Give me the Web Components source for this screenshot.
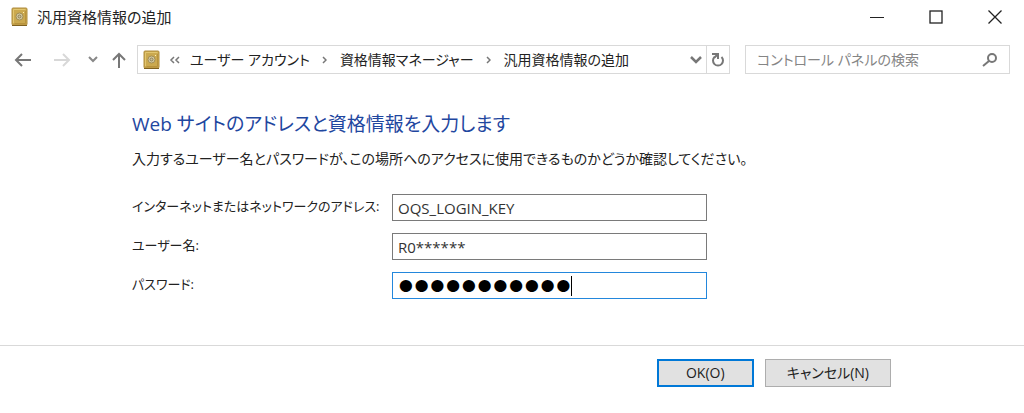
<!DOCTYPE html>
<html lang="ja">
<head>
<meta charset="utf-8">
<meta name="viewport" content="width=device-width, initial-scale=1">
<title>汎用資格情報の追加</title>
<style>
  body {
    margin: 0;
    background: #fff;
    color: #222;
    font: 15px/20px "Open Sans", "Noto Sans CJK JP", sans-serif;
    font-feature-settings: "palt";
  }
</style>
</head>
<body>
<credential-window>
  <title-bar slot="title">汎用資格情報の追加</title-bar>
  <explorer-bar slot="nav">
    <crumb-item>ユーザー アカウント</crumb-item>
    <crumb-item>資格情報マネージャー</crumb-item>
    <crumb-item>汎用資格情報の追加</crumb-item>
  </explorer-bar>
  <credential-form>
    <span slot="heading">Web サイトのアドレスと資格情報を入力します</span>
    <span slot="note">入力するユーザー名とパスワードが、この場所へのアクセスに使用できるものかどうか確認してください。</span>
    <form-field label="インターネットまたはネットワークのアドレス:" value="OQS_LOGIN_KEY"></form-field>
    <form-field label="ユーザー名:" value="R0******"></form-field>
    <form-field label="パスワード:" type="password" value="password123" active></form-field>
  </credential-form>
  <dialog-button slot="actions" primary>OK(O)</dialog-button>
  <dialog-button slot="actions">キャンセル(N)</dialog-button>
</credential-window>

<script>
(function() {
  class BaseElement extends HTMLElement {
    connectedCallback() {
      this._root = this.attachShadow({mode: 'open'});
      this._root.innerHTML = this.render();
    }
  }

  class CredentialWindow extends BaseElement {
    render() {
      return `<style>
          :host {
            display: flex;
            flex-direction: column;
            min-height: 100vh;
          }
          main {
            flex: 1;
          }
          footer {
            border-top: 1px solid #d9d9d9;
            box-sizing: border-box;
            display: flex;
            gap: 11px;
            justify-content: flex-end;
            padding: 13px 133px 26px 16px;
          }
        </style>
        <slot name="title"></slot>
        <slot name="nav"></slot>
        <main><slot></slot></main>
        <footer><slot name="actions"></slot></footer>`;
    }
  }

  // Gold safe used in the title bar and the address bar
  class VaultIcon extends BaseElement {
    render() {
      return `<style>
          :host { display: block; height: 20px; width: 17px; }
          svg { display: block; }
        </style>
        <svg width="17" height="20" viewBox="0 0 17 20" aria-hidden="true">
          <rect x="1" y="1" width="15" height="17" rx="1" fill="#cba94f" stroke="#b08d3c"/>
          <path d="M1 18.5h15" stroke="#7f6120"/>
          <path d="M2.5 16V2.500h12" fill="none" stroke="#e2c670"/>
          <path d="M14.500 4v12.500h-11" fill="none" stroke="#b8933d"/>
          <circle cx="8.500" cy="9.500" r="3.500" fill="#d9cfa6" stroke="#a08c55"/>
          <circle cx="8.500" cy="9.500" r="1.500" fill="#c9bf98" stroke="#8a7d55"/>
          <path d="M12 6l1-1" stroke="#fff1b5"/>
        </svg>`;
    }
  }

  class TitleBar extends BaseElement {
    render() {
      return `<style>
          :host {
            align-items: center;
            display: flex;
            height: 34px;
            padding-left: 11px;
          }
          span {
            flex: 1;
            margin-left: 9px;
          }
          button {
            background: none;
            border: 0;
            height: 34px;
            padding: 0;
            width: 59px;
          }
          svg { display: block; margin: auto; }
        </style>
        <vault-icon></vault-icon>
        <span><slot></slot></span>
        <button aria-label="最小化"><svg width="14" height="14"><path d="M0 7.500h14" stroke="#222"/></svg></button>
        <button aria-label="最大化"><svg width="14" height="14"><rect x="1" y="1" width="12" height="12" fill="none" stroke="#222" stroke-width="1.300"/></svg></button>
        <button aria-label="閉じる"><svg width="14" height="14"><path d="M.5.5l13 13M13.500.5l-13 13" stroke="#222" stroke-width="1.300"/></svg></button>`;
    }
  }

  class ExplorerBar extends BaseElement {
    render() {
      return `<style>
          :host {
            align-items: center;
            display: flex;
            font-size: 14px;
            padding: 11px 14px 0;
          }
          button {
            background: none;
            border: 0;
            flex: none;
            padding: 0;
          }
          svg { display: block; }
          nav {
            display: flex;
            gap: 13px;
            margin-right: 10px;
          }
          .address, .search {
            align-items: center;
            border: 1px solid #d9d9d9;
            box-sizing: border-box;
            display: flex;
            height: 29px;
          }
          .address {
            flex: 1;
            padding-left: 5px;
          }
          .spacer { flex: 1; }
          .more { margin: 0 10px 0 9px; }
          .reload {
            align-items: center;
            align-self: stretch;
            border-left: 1px solid #d9d9d9;
            display: flex;
            justify-content: center;
            margin-left: 3px;
            width: 23px;
          }
          .search {
            margin-left: 15px;
            padding: 0 11px;
            width: 265px;
          }
          input {
            background: none;
            border: 0;
            color: #222;
            flex: 1;
            font: inherit;
            font-feature-settings: inherit;
            min-width: 0;
            outline: 0;
            padding: 0;
          }
          input::placeholder { color: #858585; }
        </style>
        <nav>
          <button aria-label="戻る"><svg width="18" height="18" fill="none" stroke="#777" stroke-width="2"><path d="M17 9H2M8 3L2 9l6 6"/></svg></button>
          <button aria-label="進む"><svg width="28" height="18" fill="none" stroke="#d8d8d8" stroke-width="2"><path d="M9 9h15M18 3l6 6-6 6"/></svg></button>
          <button aria-label="最近表示した場所"><svg width="12" height="18" fill="none" stroke="#888" stroke-width="2"><path d="M3 6l4 4 4-4"/></svg></button>
          <button aria-label="上へ"><svg width="16" height="18" fill="none" stroke="#777" stroke-width="2"><path d="M8 17V3M2 9l6-6 6 6"/></svg></button>
        </nav>
        <div class="address">
          <vault-icon></vault-icon>
          <svg class="more" width="11" height="10" fill="none" stroke="#777" stroke-width="1.500"><path d="M5 2L2 5l3 3M10 2L7 5l3 3"/></svg>
          <slot></slot>
          <div class="spacer"></div>
          <button aria-label="以前の場所"><svg width="14" height="10" fill="none" stroke="#777" stroke-width="2.500"><path d="M2 2l5 5 5-5"/></svg></button>
          <button class="reload" aria-label="最新の情報に更新"><svg width="14" height="16" fill="none" stroke="#777" stroke-width="2"><path d="M10.500 5a5 5 0 1 1-7 0M1 2h6v5M7 2L3.500 5.500"/></svg></button>
        </div>
        <div class="search">
          <input type="search" aria-label="検索" placeholder="コントロール パネルの検索">
          <svg width="16" height="16" fill="none" stroke="#777" stroke-width="2"><circle cx="10" cy="6" r="4"/><path d="M7 9l-6 5"/></svg>
        </div>`;
    }
  }

  class CrumbItem extends BaseElement {
    render() {
      return `<style>
          :host {
            align-items: center;
            display: flex;
            white-space: nowrap;
          }
          :host(:last-of-type) svg { display: none; }
          a {
            color: inherit;
            text-decoration: none;
          }
          svg { margin: 0 13px 0 12px; }
        </style>
        <a href="#"><slot></slot></a>
        <svg width="5" height="8" fill="none" stroke="#777" stroke-width="1.500"><path d="M1 1l3 3-3 3"/></svg>`;
    }
  }

  class CredentialForm extends BaseElement {
    render() {
      return `<style>
          :host {
            display: block;
            padding: 36px 16px 16px 132px;
          }
          h1 {
            color: #1f479f;
            font-size: 19px;
            font-weight: normal;
            line-height: 28px;
            margin: 0;
          }
          p {
            font-size: 14px;
            margin: 11px 0 25px;
          }
          form {
            display: grid;
            gap: 12px;
          }
        </style>
        <h1><slot name="heading"></slot></h1>
        <p><slot name="note"></slot></p>
        <form><slot></slot></form>`;
    }
  }

  class FormField extends BaseElement {
    render() {
      const type = this.getAttribute('type') || 'text';
      return `<style>
          :host {
            align-items: center;
            display: grid;
            grid-template-columns: 260px minmax(0, 315px);
          }
          label {
            font-size: 13px;
            padding-bottom: 4px;
          }
          input {
            background: #fff;
            border: 1px solid #7a7a7a;
            box-sizing: border-box;
            color: #333;
            font: inherit;
            height: 27px;
            outline: 0;
            padding: 0 5px;
            width: 100%;
          }
          /* big bullets come from the mask character's own size */
          input[type=password] {
            color: #000;
            font-family: "Liberation Sans", sans-serif;
            font-size: 45px;
            line-height: 25px;
          }
          :host([active]) input {
            background: linear-gradient(#000, #000) 178px 3px / 1px 20px no-repeat #fff;
            border-color: #2387dc;
            caret-color: transparent;
          }
        </style>
        <label for="field">${this.getAttribute('label')}</label>
        <input id="field" type="${type}" value="${this.getAttribute('value')}">`;
    }
  }

  class DialogButton extends BaseElement {
    render() {
      return `<style>
          :host { display: block; }
          button {
            background: #e1e1e1;
            border: 1px solid #adadad;
            box-sizing: border-box;
            color: #222;
            font: inherit;
            font-feature-settings: inherit;
            font-size: 14px;
            height: 28px;
            min-width: 97px;
            padding: 0 21px;
          }
          :host([primary]) button { border: 2px solid #0078d7; }
        </style>
        <button type="button"><slot></slot></button>`;
    }
  }

  customElements.define('vault-icon', VaultIcon);
  customElements.define('title-bar', TitleBar);
  customElements.define('explorer-bar', ExplorerBar);
  customElements.define('crumb-item', CrumbItem);
  customElements.define('form-field', FormField);
  customElements.define('credential-form', CredentialForm);
  customElements.define('dialog-button', DialogButton);
  customElements.define('credential-window', CredentialWindow);
}());
</script>
</body>
</html>
